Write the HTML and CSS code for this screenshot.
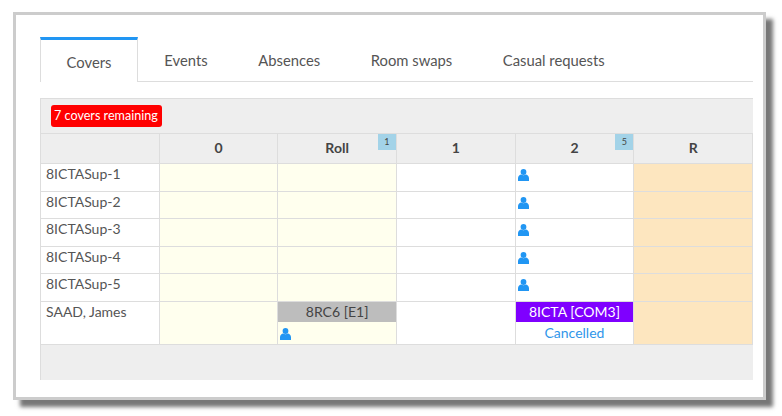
FILE: index.html
```html
<!DOCTYPE html>
<html lang="en">
<head>
  <meta charset="UTF-8" />
  <title>Covers</title>
  <link rel="stylesheet" href="styles.css">
</head>
<body>
  <svg class="defs" width="0" height="0">
    <symbol id="person" viewBox="0 0 11 12">
      <circle cx="5.5" cy="3" r="2.9"/>
      <path d="M0 12V9.2C0 7.2 1.6 5.8 3.2 5.6C4.5 6.4 6.5 6.4 7.8 5.6C9.4 5.8 11 7.2 11 9.2V12Z"/>
    </symbol>
  </svg>
  <div class="frame">
    <ul class="tabs">
      <li class="tab active">Covers</li>
      <li class="tab">Events</li>
      <li class="tab">Absences</li>
      <li class="tab">Room swaps</li>
      <li class="tab">Casual requests</li>
    </ul>
    <div class="panel">
      <div class="toolbar"><span class="remaining">7 covers remaining</span></div>
      <table class="grid">
        <thead>
          <tr>
            <th></th>
            <th>0</th>
            <th>Roll<span class="count">1</span></th>
            <th>1</th>
            <th>2<span class="count">5</span></th>
            <th>R</th>
          </tr>
        </thead>
        <tbody>
          <tr>
            <td>8ICTASup-1</td><td class="before"></td><td class="before"></td><td></td>
            <td><svg class="person"><use href="#person"/></svg></td><td class="after"></td>
          </tr>
          <tr>
            <td>8ICTASup-2</td><td class="before"></td><td class="before"></td><td></td>
            <td><svg class="person"><use href="#person"/></svg></td><td class="after"></td>
          </tr>
          <tr>
            <td>8ICTASup-3</td><td class="before"></td><td class="before"></td><td></td>
            <td><svg class="person"><use href="#person"/></svg></td><td class="after"></td>
          </tr>
          <tr>
            <td>8ICTASup-4</td><td class="before"></td><td class="before"></td><td></td>
            <td><svg class="person"><use href="#person"/></svg></td><td class="after"></td>
          </tr>
          <tr>
            <td>8ICTASup-5</td><td class="before"></td><td class="before"></td><td></td>
            <td><svg class="person"><use href="#person"/></svg></td><td class="after"></td>
          </tr>
          <tr class="teacher">
            <td>SAAD, James</td>
            <td class="before"></td>
            <td class="before slot">
              <div class="lesson grey">8RC6 [E1]</div>
              <svg class="person"><use href="#person"/></svg>
            </td>
            <td></td>
            <td class="slot">
              <div class="lesson purple">8ICTA [COM3]</div>
              <div class="cancelled">Cancelled</div>
            </td>
            <td class="after"></td>
          </tr>
        </tbody>
      </table>
    </div>
  </div>
</body>
</html>
```

FILE: styles.css
```css
html, body {
  height: 100%;
}

body {
  margin: 0;
  padding: 12px 0 0 13px;
  box-sizing: border-box;
  background: #fff;
  font-family: 'Lato', sans-serif;
  font-size: 14px;
  color: #555;
}

.defs {
  position: absolute;
}

.frame {
  box-sizing: border-box;
  width: 753px;
  height: 388px;
  padding: 22px 10px 0 24px;
  background: #fff;
  border: 3px solid #ccc;
  box-shadow: 7px 7px 4px #777;
}

.tabs {
  display: flex;
  height: 44px;
  margin: 0;
  padding: 0;
  list-style: none;
  font-size: 14.8px;
  border-bottom: 1px solid #ddd;
}

.tab {
  padding: 0 25.3px;
  line-height: 41px;
  margin-top: 3px;
}

.tab.active {
  box-sizing: border-box;
  width: 98px;
  height: 45px;
  margin: 0 1px 0 0;
  padding: 0;
  text-align: center;
  line-height: 44px;
  background: #fff;
  border: 1px solid #ddd;
  border-top: 3px solid #2196f3;
  border-bottom: none;
}

.panel {
  height: 281px;
  margin-top: 16px;
  background: #eee;
  border-top: 1px solid #ddd;
  border-left: 1px solid #ddd;
}

.toolbar {
  height: 34px;
  padding: 6px 0 0 10px;
  box-sizing: border-box;
}

.remaining {
  display: inline-block;
  height: 22px;
  padding: 0 4px 0 3px;
  line-height: 22px;
  font-size: 12.6px;
  color: #fff;
  background: #f00;
  border-radius: 3px;
}

.grid {
  table-layout: fixed;
  width: 713px;
  margin-left: -1px;
  border-collapse: collapse;
}

.grid th,
.grid td {
  padding: 0;
  border: 1px solid #ddd;
}

.grid th {
  position: relative;
  height: 30px;
  padding-bottom: 2px;
  box-sizing: border-box;
  background: #eee;
  font-size: 14px;
  color: #444;
}

.grid tbody td {
  height: 26.5px;
  padding: 0 5px;
  vertical-align: top;
  line-height: 19px;
  background: #fff;
}

.grid tbody td.before {
  background: #ffffee;
}

.grid tbody td.after {
  background: #fde6bf;
}

.grid tbody td.slot {
  padding: 0;
}

.grid tbody .teacher td {
  height: 41px;
}

.count {
  position: absolute;
  top: 0;
  right: 0;
  width: 18px;
  height: 16px;
  line-height: 15px;
  font-size: 9px;
  font-weight: 400;
  text-align: center;
  background: #a3d3e8;
}

.person {
  display: block;
  width: 11px;
  height: 12px;
  margin: 5px 0 0 -3px;
  fill: #2196f3;
}

.slot .person {
  margin: 6px 0 0 2px;
}

.lesson {
  height: 20px;
  line-height: 19px;
  text-align: center;
}

.lesson.grey {
  background: #bdbdbd;
  color: #444;
}

.lesson.purple {
  background: #7f00ff;
  color: #fff;
}

.cancelled {
  line-height: 22px;
  text-align: center;
  color: #2f96ea;
}
```
